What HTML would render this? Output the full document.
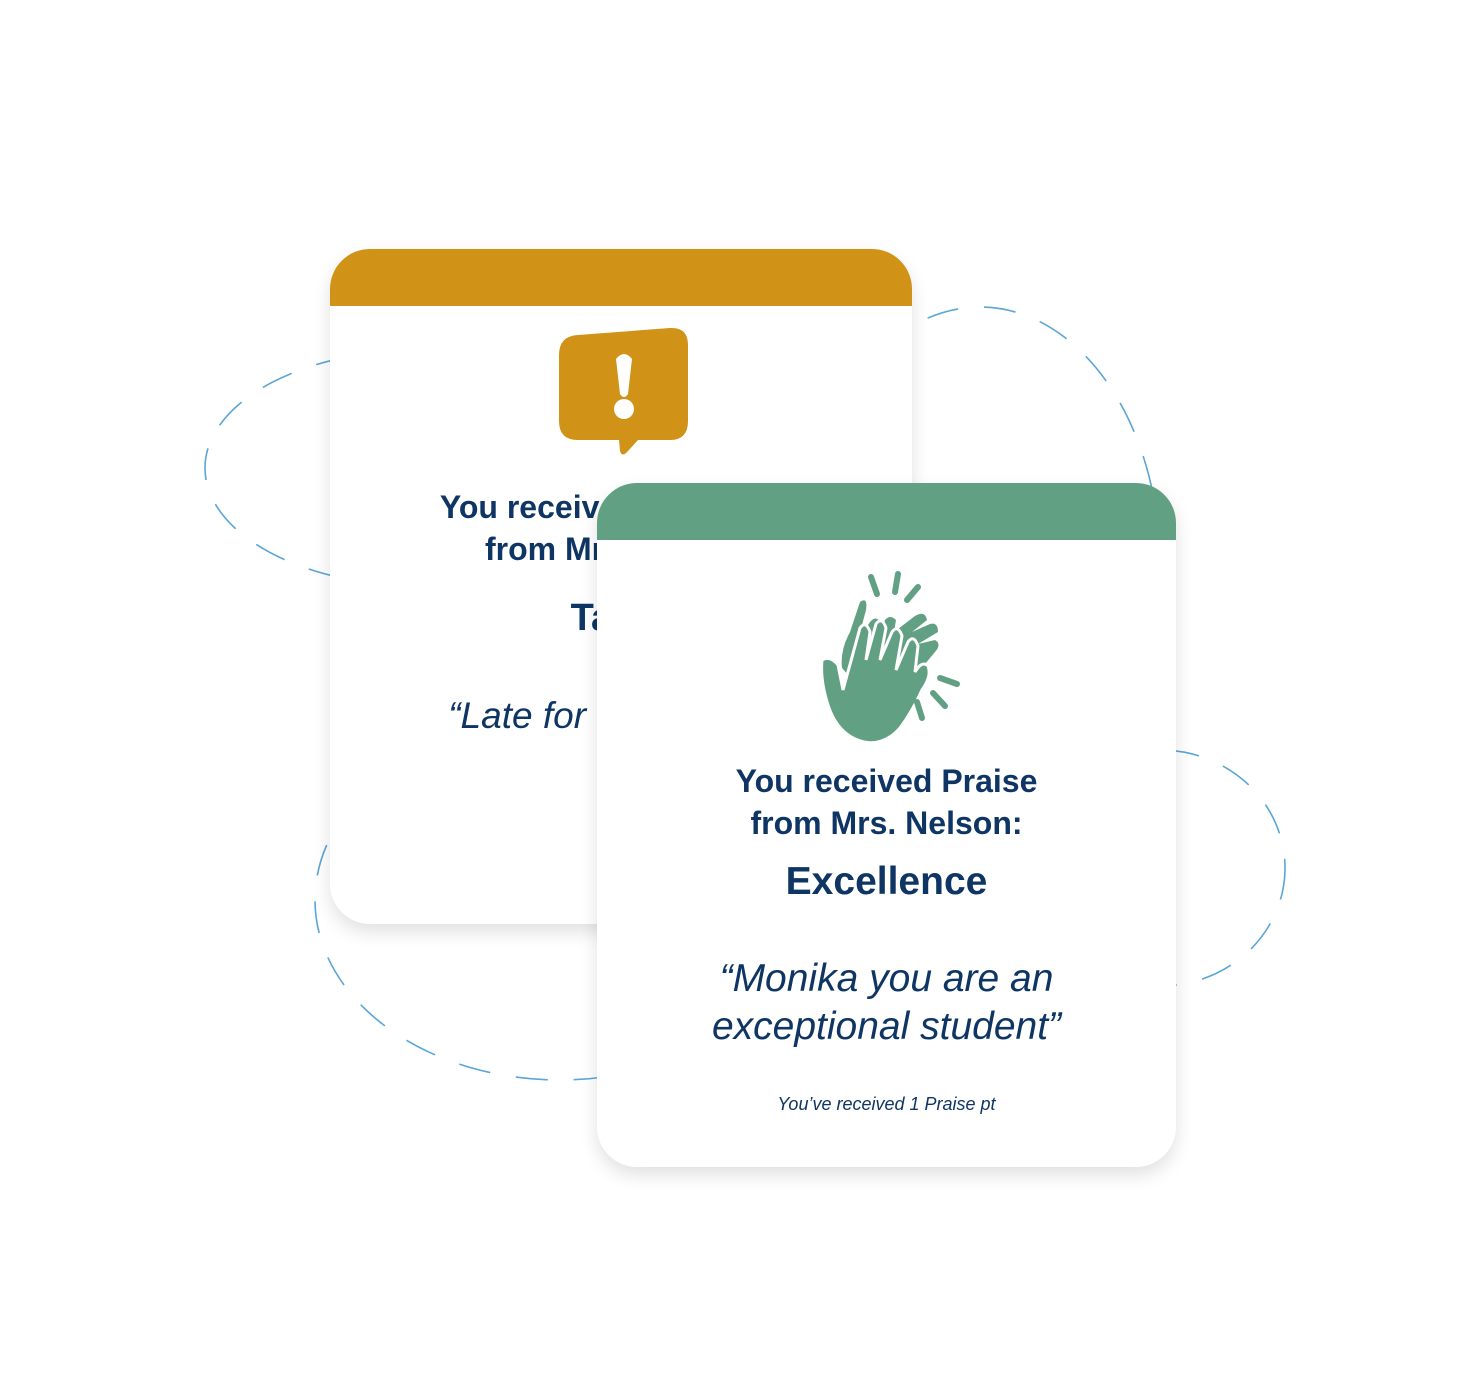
<!DOCTYPE html>
<html><head><meta charset="utf-8"><style>
html,body{margin:0;padding:0;background:#fff;}
body{width:1460px;height:1392px;position:relative;overflow:hidden;font-family:"Liberation Sans",sans-serif;color:#0e3563;}
.card{position:absolute;background:#fff;border-radius:40px;box-shadow:0 8px 18px rgba(0,0,0,0.12);overflow:hidden;}
.hd{position:absolute;left:0;right:0;top:0;height:57px;}
.t{position:absolute;white-space:nowrap;text-align:center;}
</style></head><body>
<svg width="1460" height="1392" style="position:absolute;left:0;top:0" fill="none" stroke="#5aa6d6" stroke-width="1.6" stroke-dasharray="32 26">
<ellipse cx="420" cy="468" rx="215" ry="118"/>
<ellipse cx="980" cy="565" rx="180" ry="258"/>
<ellipse cx="560" cy="900" rx="245" ry="180"/>
<ellipse cx="1160" cy="868" rx="125" ry="118"/>
</svg>

<div class="card" style="left:330px;top:249px;width:582px;height:675px;">
  <div class="hd" style="background:#d09217;"></div>
  <svg style="position:absolute;left:228px;top:78px" width="132" height="132" viewBox="0 0 132 132">
    <path d="M20 8 L112 1 Q130 0 130 18 L130 94 Q130 113 112 113 L80 113 L70 124 Q64 131 62 124 L61 113 L20 113 Q1 113 1 94 L1 28 Q1 9 20 8Z" fill="#d09217"/>
    <path d="M58 32 Q66 22 74 32 L70 67 Q66 73 62 67Z" fill="#fff"/>
    <circle cx="66" cy="82" r="10" fill="#fff"/>
  </svg>
  <div class="t" style="left:0;width:582px;top:240px;font-size:32px;font-weight:bold;">You received a Concern</div>
  <div class="t" style="left:0;width:582px;top:282px;font-size:32px;font-weight:bold;">from Mrs. Nelson:</div>
  <div class="t" style="left:0;width:582px;top:348px;font-size:38px;font-weight:bold;">Tardy</div>
  <div class="t" style="left:0;width:582px;top:446px;font-size:37px;font-style:italic;">“Late for class again”</div>
</div>

<div class="card" style="left:597px;top:483px;width:579px;height:684px;">
  <div class="hd" style="background:#62a084;"></div>
  <svg style="position:absolute;left:203px;top:77px" width="180" height="200" viewBox="800 560 180 200" fill="#62a084">
    <path d="M860 602 Q868 596 866 610 L858 640 L870 622 Q876 615 880 622 L878 640 L885 620 Q890 614 896 620 L894 632 L915 616 Q925 610 927 620 L912 632 L930 624 Q938 622 938 632 L918 644 L935 640 Q942 644 935 652 L925 664 L915 690 Q905 720 896 728 L870 700 L842 668 Q840 650 850 632Z"/>
    <path d="M822 660 Q830 655 838 665 L843 690 L860 628 Q866 620 870 632 L866 660 L876 624 Q882 616 886 628 L880 660 L892 632 Q898 624 902 636 L896 670 L908 642 Q914 634 918 646 L915 672 Q922 660 928 666 Q932 676 922 690 Q912 712 900 728 Q884 746 864 742 Q838 736 828 705 Q820 680 822 660Z" stroke="#fff" stroke-width="3"/>
    <g stroke="#62a084" stroke-width="6" stroke-linecap="round" fill="none">
      <path d="M871 577 L877 594"/><path d="M898 574 L895 592"/><path d="M918 587 L907 600"/>
      <path d="M940 678 L957 684"/><path d="M933 693 L945 706"/><path d="M917 702 L922 718"/>
    </g>
  </svg>
  <div class="t" style="left:0;width:579px;top:280px;font-size:32px;font-weight:bold;">You received Praise</div>
  <div class="t" style="left:0;width:579px;top:322px;font-size:32px;font-weight:bold;">from Mrs. Nelson:</div>
  <div class="t" style="left:0;width:579px;top:377px;font-size:39px;font-weight:bold;">Excellence</div>
  <div class="t" style="left:0;width:579px;top:472px;font-size:39px;font-style:italic;line-height:48px;">“Monika you are an<br>exceptional student”</div>
  <div class="t" style="left:0;width:579px;top:611px;font-size:18px;font-style:italic;">You’ve received 1 Praise pt</div>
</div>
</body></html>
